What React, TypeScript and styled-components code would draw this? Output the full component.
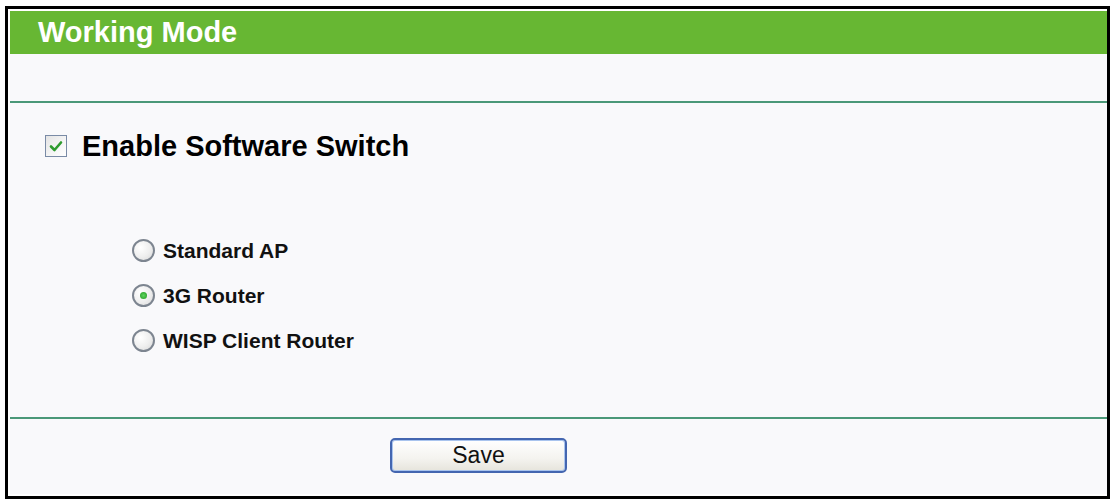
import { FC } from 'react';
import styled, { createGlobalStyle } from 'styled-components';

const GlobalStyle = createGlobalStyle`
    html, body {
        margin: 0;
        padding: 0;
        background: #ffffff;
    }
    body {
        font-family: "Liberation Sans", Arial, sans-serif;
    }
`;

const modes = [
    { id: 'ap', label: 'Standard AP', checked: false },
    { id: '3g', label: '3G Router', checked: true },
    { id: 'wisp', label: 'WISP Client Router', checked: false },
];

const App: FC = () => (
    <>
        <GlobalStyle />
        <Frame>
            <Panel>
                <Header>Working Mode</Header>
                <Spacer />
                <Divider />
                <SwitchRow>
                    <CheckBox>
                        <svg width="14" height="12" viewBox="0 0 14 12">
                            <path d="M2 6.5 L5.5 10 L12 2.5" fill="none" stroke="#2e9b2e" strokeWidth="2.6" strokeLinecap="round" strokeLinejoin="round" />
                        </svg>
                    </CheckBox>
                    <SwitchLabel>Enable Software Switch</SwitchLabel>
                </SwitchRow>
                <ModeList>
                    {modes.map((m) => (
                        <ModeRow key={m.id}>
                            <Radio checked={m.checked} />
                            <ModeLabel>{m.label}</ModeLabel>
                        </ModeRow>
                    ))}
                </ModeList>
                <Divider />
                <Footer>
                    <SaveButton>Save</SaveButton>
                </Footer>
            </Panel>
        </Frame>
    </>
);

const Frame = styled.div`
    margin: 6px 2px 0 5px;
    height: 483px;
    border: 3px solid #000;
    padding: 2px 0 2px 2px;
    box-sizing: content-box;
    background: #ffffff;
`;

const Panel = styled.div`
    height: 100%;
    background: #f9f9fb;
    display: flex;
    flex-direction: column;
`;

const Header = styled.div`
    height: 43px;
    background: #67b733;
    color: #ffffff;
    font-weight: bold;
    font-size: 29px;
    line-height: 43px;
    padding-left: 28px;
`;

const Spacer = styled.div`
    height: 47px;
`;

const Divider = styled.div`
    height: 2px;
    background: #4b9878;
`;

const SwitchRow = styled.div`
    display: flex;
    align-items: center;
    gap: 15px;
    padding: 31px 0 0 35px;
    height: 24px;
`;

const CheckBox = styled.span`
    width: 20px;
    height: 20px;
    border: 1px solid #7a8ba6;
    background: linear-gradient(135deg, #e4e4e4 0%, #f6f6f6 60%, #ffffff 100%);
    display: flex;
    align-items: center;
    justify-content: center;
`;

const SwitchLabel = styled.span`
    font-size: 29px;
    font-weight: bold;
    color: #000;
`;

const ModeList = styled.div`
    display: flex;
    flex-direction: column;
    gap: 22px;
    padding: 81px 0 0 122px;
    flex: 1;
`;

const ModeRow = styled.div`
    display: flex;
    align-items: center;
    gap: 8px;
    height: 23px;
`;

const Radio = styled.span<{ checked: boolean }>`
    width: 19px;
    height: 19px;
    border-radius: 50%;
    border: 2px solid #7d8590;
    background: radial-gradient(circle at 35% 35%, #ffffff 0%, #eeeeee 55%, #d8d8d8 100%);
    position: relative;
    flex-shrink: 0;

    &::after {
        content: '';
        display: ${({ checked }) => (checked ? 'block' : 'none')};
        position: absolute;
        left: 50%;
        top: 50%;
        width: 7px;
        height: 7px;
        margin: -3.5px 0 0 -3.5px;
        border-radius: 50%;
        background: radial-gradient(circle, #5fd35f 0%, #1f9a1f 100%);
    }
`;

const ModeLabel = styled.span`
    font-size: 21px;
    font-weight: bold;
    color: #111;
`;

const Footer = styled.div`
    height: 72px;
    padding-bottom: 3px;
    display: flex;
    align-items: center;
    padding-left: 380px;
`;

const SaveButton = styled.button`
    width: 177px;
    height: 35px;
    border: 2px solid #4466b0;
    border-radius: 5px;
    background: linear-gradient(#ffffff 0%, #f4f3ef 60%, #e6e4dc 100%);
    box-shadow: inset 0 0 0 1px #a9c4ee;
    font-family: "Liberation Sans", Arial, sans-serif;
    font-size: 23px;
    color: #111;
    cursor: pointer;
    padding: 0;
`;

export default App;
